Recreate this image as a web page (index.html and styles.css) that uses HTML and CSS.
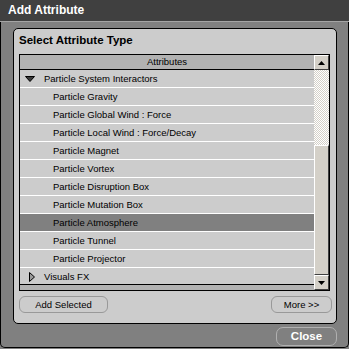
FILE: index.html
```html
<!DOCTYPE html>
<html lang="en">
<head>
    <meta charset="UTF-8">
    <title>Add Attribute</title>
    <link rel="stylesheet" href="styles.css">
</head>
<body>
<div class="window">
    <div class="titlebar">Add Attribute</div>
    <div class="panel">
        <div class="panel-title">Select Attribute Type</div>
        <div class="listbox">
            <div class="list-col">
                <div class="list-header">Attributes</div>
                <div class="list-rows">
                    <div class="row group">
                        <svg class="twisty" width="10" height="6" viewBox="0 0 10 6"><polygon points="0.5,0.5 9.5,0.5 5,5.5" fill="#3a3a3a" stroke="#000" stroke-width="1"/></svg>
                        Particle System Interactors
                    </div>
                    <div class="row child">Particle Gravity</div>
                    <div class="row child">Particle Global Wind : Force</div>
                    <div class="row child">Particle Local Wind : Force/Decay</div>
                    <div class="row child">Particle Magnet</div>
                    <div class="row child">Particle Vortex</div>
                    <div class="row child">Particle Disruption Box</div>
                    <div class="row child">Particle Mutation Box</div>
                    <div class="row child selected">Particle Atmosphere</div>
                    <div class="row child">Particle Tunnel</div>
                    <div class="row child">Particle Projector</div>
                    <div class="row group closed">
                        <svg class="twisty" width="10" height="10" viewBox="0 0 10 10"><polygon points="2.5,0.5 7.5,5 2.5,9.5" fill="#9a9a9a" stroke="#000" stroke-width="1"/></svg>
                        Visuals FX
                    </div>
                </div>
                <div class="list-foot"></div>
            </div>
            <div class="scrollbar">
                <div class="sb-btn">
                    <svg width="7" height="4" viewBox="0 0 7 4"><polygon points="3.5,0 7,4 0,4" fill="#000"/></svg>
                </div>
                <div class="sb-track">
                    <div class="sb-thumb"></div>
                </div>
                <div class="sb-btn">
                    <svg width="7" height="4" viewBox="0 0 7 4"><polygon points="0,0 7,0 3.5,4" fill="#000"/></svg>
                </div>
            </div>
        </div>
        <div class="panel-buttons">
            <button class="btn add">Add Selected</button>
            <button class="btn more">More &gt;&gt;</button>
        </div>
    </div>
    <div class="footer">
        <button class="btn close">Close</button>
    </div>
</div>
</body>
</html>
```

FILE: styles.css
```css
body {
    margin: 0;
    padding: 0;
    background-color: #808080;
    font-family: "Liberation Sans", Arial, sans-serif;
}

.window {
    width: 349px;
    height: 348px;
    box-sizing: border-box;
    background-color: #808080;
    border: 1px solid #000;
    border-top: none;
    border-radius: 0 0 5px 5px;
    display: flex;
    flex-direction: column;
}

.titlebar {
    height: 21px;
    line-height: 20px;
    margin: 0 -1px;
    padding-left: 8px;
    background-color: #404040;
    border-bottom: 1px solid #a4a4a4;
    color: white;
    font-weight: bold;
    font-size: 12px;
}

.panel {
    margin: 6px 11px 0 12px;
    height: 296px;
    box-sizing: border-box;
    background-color: #cccccc;
    border: 1px solid #000;
    border-radius: 5px;
    padding: 0 6px 0 5px;
    display: flex;
    flex-direction: column;
}

.panel-title {
    line-height: 22px;
    margin-bottom: 3px;
    font-weight: bold;
    font-size: 11.5px;
    color: #000;
}

.listbox {
    height: 237px;
    box-sizing: border-box;
    border: 1px solid #000;
    display: flex;
}

.list-col {
    flex: 1;
    display: flex;
    flex-direction: column;
}

.list-header {
    height: 14px;
    line-height: 14px;
    background-color: #b2b2b2;
    border-bottom: 1px solid #000;
    text-align: center;
    font-size: 9.5px;
}

.list-rows {
    height: 214px;
    overflow: hidden;
    background-color: #cccccc;
    border-bottom: 1px solid #000;
}

.row {
    height: 18px;
    box-sizing: border-box;
    padding-top: 1px;
    line-height: 16px;
    border-bottom: 1px solid #fff;
    font-size: 9.5px;
    color: #000;
    white-space: nowrap;
    display: flex;
    align-items: center;
}

.row.child {
    padding-left: 33px;
}

.row.group {
    padding-left: 5px;
}

.row .twisty {
    width: 10px;
    margin-right: 9px;
}

.row.closed {
    padding-left: 7px;
}

.row.closed .twisty {
    margin-right: 7px;
}

.row.selected {
    background-color: #808080;
}

.list-foot {
    height: 5px;
    background-color: #b2b2b2;
}

.scrollbar {
    width: 15px;
    display: flex;
    flex-direction: column;
}

.sb-btn {
    height: 15px;
    box-sizing: border-box;
    background-color: #d4d0c8;
    border: 1px solid;
    border-color: #fff #404040 #404040 #fff;
    display: flex;
    align-items: center;
    justify-content: center;
}

.sb-track {
    flex: 1;
    display: flex;
    flex-direction: column;
    background: repeating-conic-gradient(#ffffff 0 25%, #d4d0c8 0 50%) 0 0 / 2px 2px;
}

.sb-thumb {
    margin-top: 75px;
    flex: 1;
    background-color: #d4d0c8;
    border: 1px solid;
    border-color: #fff #404040 #404040 #fff;
}

.panel-buttons {
    margin-top: 5px;
    display: flex;
    justify-content: space-between;
}

.btn {
    font-family: "Liberation Sans", Arial, sans-serif;
    font-size: 9.5px;
    color: #000;
    background-color: #cccccc;
    border: 1px solid #999;
    border-radius: 6px;
    padding: 0;
    height: 17px;
    line-height: 15px;
}

.btn.add {
    width: 89px;
}

.btn.more {
    width: 61px;
    margin-right: -2px;
}

.footer {
    margin: 3px 11px 0 0;
    display: flex;
    justify-content: flex-end;
}

.btn.close {
    width: 61px;
    height: 19px;
    line-height: 17px;
    background-color: #808080;
    border-color: #b0b0b0;
    color: white;
    font-weight: bold;
    font-size: 11.5px;
    border-radius: 7px;
}
```
